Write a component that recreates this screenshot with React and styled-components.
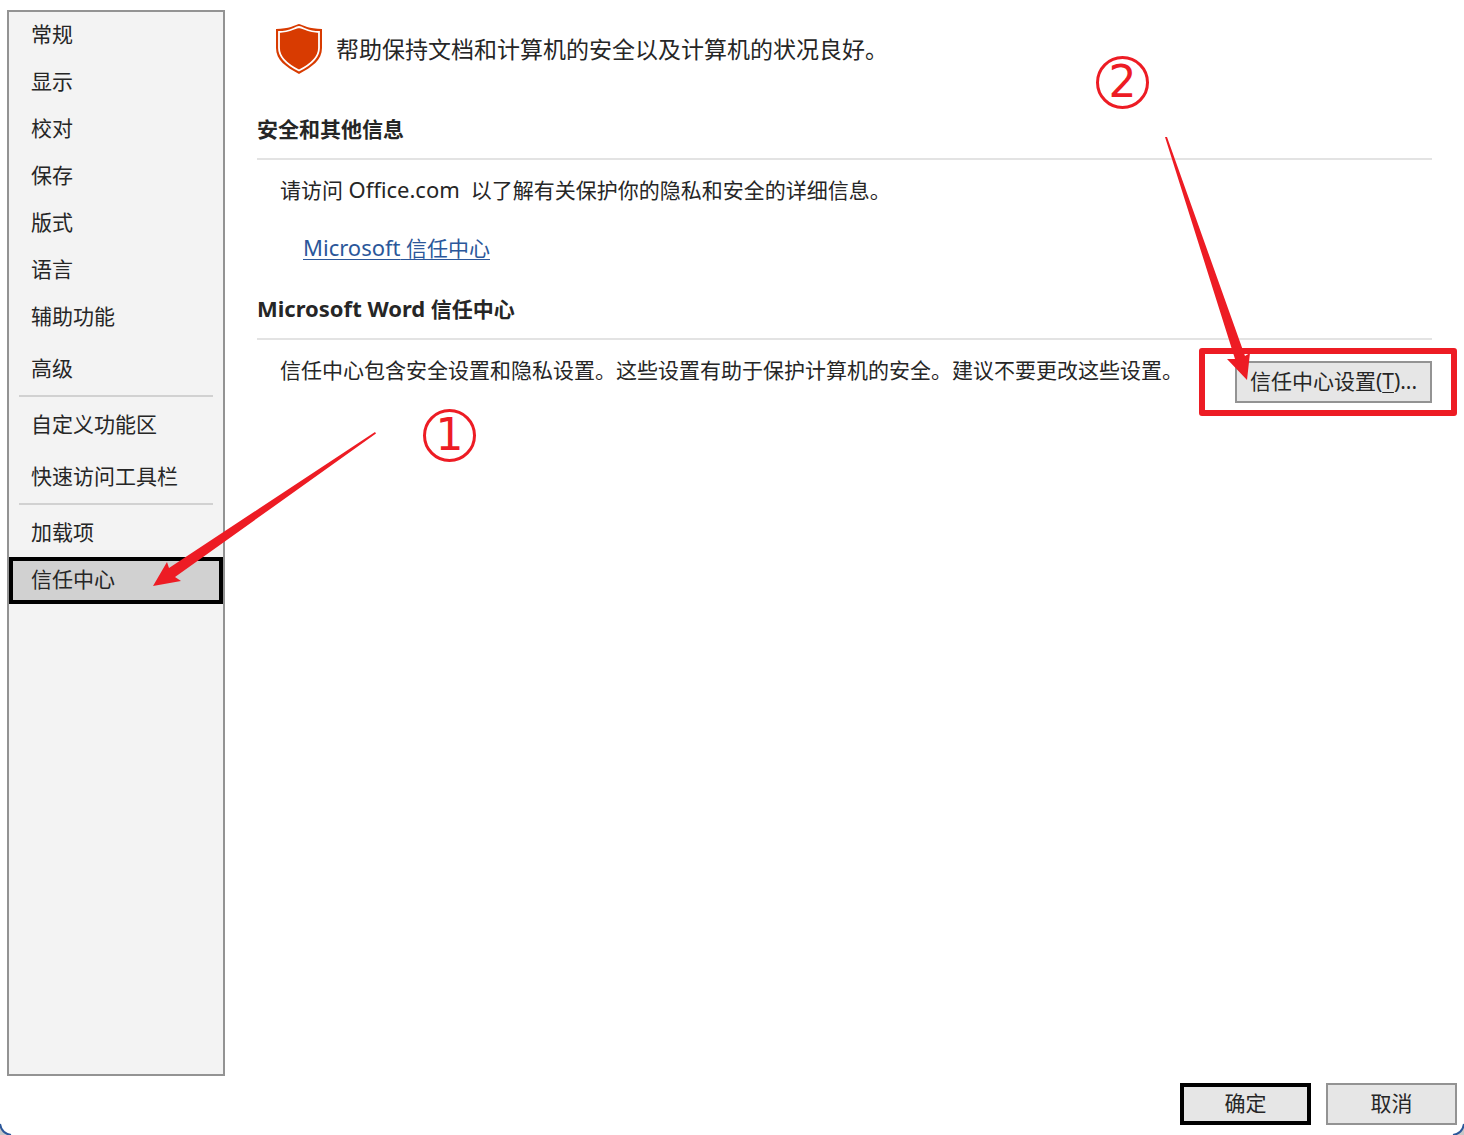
import { useState } from "react";
import styled, { createGlobalStyle } from "styled-components";

const GlobalStyle = createGlobalStyle`
    * {
        box-sizing: border-box;
    }

    body {
        margin: 0;
        background: #fff;
        color: #262626;
        font-family: "Noto Sans", "Noto Sans CJK SC", sans-serif;
        font-size: 21px;
        line-height: 32px;
    }

    button {
        font: inherit;
        color: inherit;
    }
    `;

const Dialog = styled.div`
    position: relative;
    display: flex;
    flex-direction: column;
    min-height: 100vh;
    padding: 10px 7px;
    overflow: hidden;
    `;

const Body = styled.div`
    display: flex;
    flex: 1;
    `;

const Sidebar = styled.nav`
    display: flex;
    flex-direction: column;
    flex: 0 0 218px;
    border: 2px solid #939393;
    background: #f3f3f3;
    `;

const NavItem = styled.button`
    position: relative;
    height: 47px;
    margin: ${({ $spaced }) => ($spaced ? "5px 0 0" : "0")};
    padding: 0 0 4px ${({ $active }) => ($active ? "18px" : "22px")};
    border: ${({ $active }) => ($active ? "4px solid #000" : "none")};
    background: ${({ $active }) => ($active ? "#d1d1d1" : "transparent")};
    text-align: left;
    `;

const Divider = styled.hr`
    width: auto;
    height: 2px;
    margin: 2px 10px 0;
    border: none;
    background: #d1d1d1;
    `;

const Content = styled.main`
    flex: 1;
    min-width: 0;
    padding: 14px 25px 0 32px;
    `;

const Intro = styled.header`
    display: flex;
    align-items: center;
    gap: 14px;
    height: 50px;
    margin-bottom: 39px;
    padding-left: 19px;
    font-size: 23px;
    `;

const Section = styled.section`
    margin-bottom: 29px;
    `;

const SectionTitle = styled.h2`
    margin: 0 0 14px;
    padding-bottom: 13px;
    border-bottom: 2px solid #e3e3e3;
    font-size: 21px;
    font-weight: 700;
    line-height: 32px;
    `;

const Latin = styled.span`
    font-size: 22px;
    line-height: 22px;
    `;

const Text = styled.p`
    margin: 0;
    padding-left: 23px;
    white-space: pre-wrap;
    `;

const LinkLine = styled.p`
    margin: 26px 0 0;
    padding-left: 46px;
    `;

const Link = styled.a`
    color: #2b579a;
    text-decoration: underline;
    text-decoration-thickness: 1px;
    text-underline-offset: 3px;
    `;

const SettingsRow = styled.div`
    display: flex;
    align-items: flex-start;
    justify-content: space-between;
    `;

const ButtonSpot = styled.div`
    position: relative;
    flex: none;
    margin-top: 7px;
    `;

const Button = styled.button`
    display: block;
    width: ${({ $wide }) => ($wide ? "197px" : "131px")};
    height: 42px;
    padding: 0 0 2px;
    border: ${({ $primary }) => ($primary ? "4px solid #000" : "2px solid #939393")};
    background: #e6e6e6;
    white-space: nowrap;
    `;

const AccessKey = styled.u`
    text-decoration-thickness: 1px;
    text-underline-offset: 3px;
    `;

const Footer = styled.footer`
    display: flex;
    justify-content: flex-end;
    gap: 15px;
    padding-top: 7px;
    `;

const Highlight = styled.div`
    position: absolute;
    inset: -13px -25px -13px -36px;
    border: 6px solid #ed1c24;
    border-radius: 3px;
    pointer-events: none;
    `;

const Arrow = styled.svg`
    position: absolute;
    top: ${({ $top }) => $top}px;
    left: ${({ $left }) => $left}px;
    z-index: 1;
    fill: #ed1c24;
    pointer-events: none;
    `;

const Step = styled.span`
    position: absolute;
    top: ${({ $top }) => $top}px;
    left: ${({ $left }) => $left}px;
    z-index: 1;
    width: 53px;
    height: 53px;
    border: 3px solid #ed1c24;
    border-radius: 50%;
    color: #ed1c24;
    font-family: "DejaVu Sans", sans-serif;
    font-size: 44px;
    line-height: 46px;
    text-align: center;
    pointer-events: none;
    `;

const Corner = styled.svg`
    position: absolute;
    bottom: 0;
    ${({ $side }) => $side}: 0;
    transform: ${({ $side }) => ($side === "right" ? "scaleX(-1)" : "none")};
    `;

const navItems = [
    { label: "常规" },
    { label: "显示" },
    { label: "校对" },
    { label: "保存" },
    { label: "版式" },
    { label: "语言" },
    { label: "辅助功能" },
    { label: "高级", spaced: true },
    { divider: true },
    { label: "自定义功能区", spaced: true },
    { label: "快速访问工具栏", spaced: true },
    { divider: true },
    { label: "加载项", spaced: true },
    { label: "信任中心", marked: true },
];

function ShieldIcon() {
    return (
        <svg width="46" height="50" viewBox="0 0 46 50" aria-hidden="true">
            <path
                fill="#d83b01"
                d="M23 0C27 1 33 5 46 5V24C46 36 36 43 23 50C10 43 0 36 0 24V5C13 5 19 1 23 0Z"
            />
            <path
                fill="#d83b01"
                stroke="#fff"
                strokeWidth="1.800"
                d="M23 3C28 4 33 8 43 8V24C43 34 34 41 23 46.500C12 41 3 34 3 24V8C13 8 18 4 23 3Z"
            />
        </svg>
    );
}

function WindowCorner({ side }) {
    return (
        <Corner $side={side} width="14" height="14" viewBox="0 0 14 14" aria-hidden="true">
            <path fill="#c8c8c8" d="M0 3C1 9 5 13 11 14H0Z" />
            <path fill="none" stroke="#2b579a" strokeWidth="2" d="M0 3C1 9 5 13 11 14" />
        </Corner>
    );
}

function App() {
    const [active, setActive] = useState("信任中心");

    return (
        <>
            <GlobalStyle />
            <Dialog>
                <Body>
                    <Sidebar>
                        {navItems.map((item, index) =>
                            item.divider ? (
                                <Divider key={index} />
                            ) : (
                                <NavItem
                                    key={item.label}
                                    type="button"
                                    $active={item.label === active}
                                    $spaced={item.spaced}
                                    onClick={() => setActive(item.label)}
                                >
                                    {item.label}
                                    {item.marked && (
                                        <>
                                            <Arrow $top={-131} $left={137} width="230" height="160" aria-hidden="true">
                                                <path d="M225 2L226 3.500L25 147L31 151L3 156L17 132L19 138Z" />
                                            </Arrow>
                                            <Step $top={-152} $left={410}>1</Step>
                                        </>
                                    )}
                                </NavItem>
                            )
                        )}
                    </Sidebar>

                    <Content>
                        <Intro>
                            <ShieldIcon />
                            <span>帮助保持文档和计算机的安全以及计算机的状况良好。</span>
                        </Intro>

                        <Section>
                            <SectionTitle>安全和其他信息</SectionTitle>
                            <Text>
                                请访问 <Latin>Office.com</Latin>
                                {"  以了解有关保护你的隐私和安全的详细信息。"}
                            </Text>
                            <LinkLine>
                                <Link href="#trust-center">
                                    <Latin>Microsoft</Latin> 信任中心
                                </Link>
                            </LinkLine>
                        </Section>

                        <Section>
                            <SectionTitle>
                                <Latin>Microsoft Word</Latin> 信任中心
                            </SectionTitle>
                            <SettingsRow>
                                <Text>信任中心包含安全设置和隐私设置。这些设置有助于保护计算机的安全。建议不要更改这些设置。</Text>
                                <ButtonSpot>
                                    <Button type="button" $wide>
                                        信任中心设置(<AccessKey>T</AccessKey>)...
                                    </Button>
                                    <Highlight />
                                    <Arrow $top={-231} $left={-76} width="100" height="255" aria-hidden="true">
                                        <path d="M6 7L8 7L86 226L91 223L88 250L68 229L76 229Z" />
                                    </Arrow>
                                    <Step $top={-305} $left={-139}>2</Step>
                                </ButtonSpot>
                            </SettingsRow>
                        </Section>
                    </Content>
                </Body>

                <Footer>
                    <Button type="button" $primary>确定</Button>
                    <Button type="button">取消</Button>
                </Footer>

                <WindowCorner side="left" />
                <WindowCorner side="right" />
            </Dialog>
        </>
    );
}

export default App;
